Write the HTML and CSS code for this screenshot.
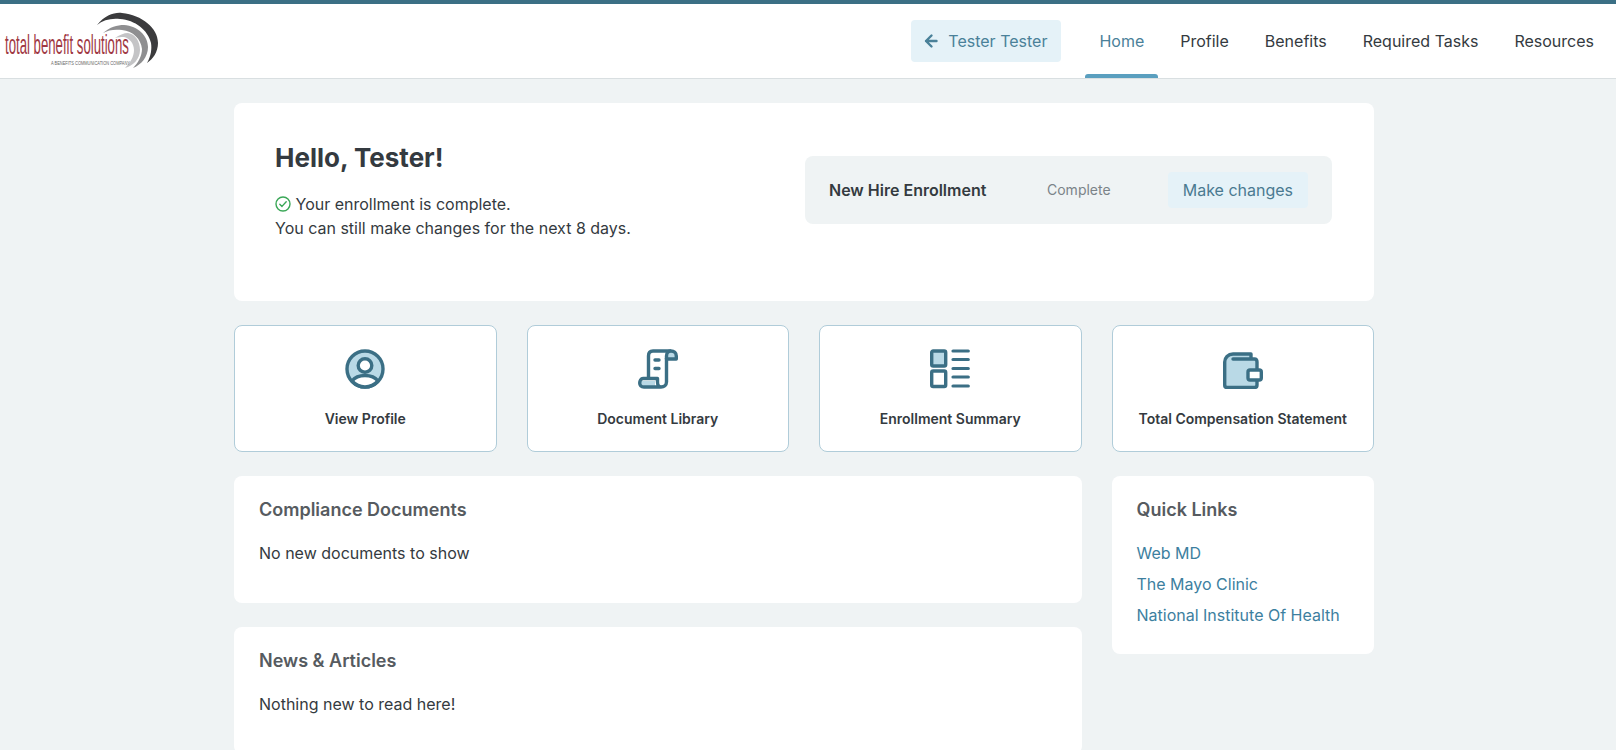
FILE: index.html
```html
<!DOCTYPE html>
<html lang="en">
<head>
<meta charset="utf-8">
<title>Total Benefit Solutions</title>
<link rel="stylesheet" href="styles.css">
</head>
<body>
<header class="header">
  <a class="logo" href="#">
    <svg width="165" height="72" viewBox="0 4 165 72">
      <path d="M97 25C105 15 115 12 122 13C142 15 158 28 158 43C158 52 153 59 147 63C151 56 152 49 151 43C148 30 135 20 120 19C111 18 103 20 97 25Z" fill="#3b3b3d"/>
      <path d="M103 33C110 27 117 25 124 25C138 26 148 36 148 47C148 57 141 65 133 68C138 63 142 56 142 49C141 39 133 31 122 30C115 29 108 30 103 33Z" fill="#8f8f91"/>
      <path d="M115 38C119 35 124 33 128 33C135 34 140 41 140 50C140 59 133 66 125 68C130 63 134 57 134 50C134 43 129 38 124 37C121 37 118 37 115 38Z" fill="#c4c4c6"/>
      <text class="logo-name" transform="translate(5 53.500) scale(.463 1)">total benefit solutions</text>
      <text class="logo-tag" x="51" y="64.500" textLength="79" lengthAdjust="spacingAndGlyphs">A BENEFITS COMMUNICATION COMPANY</text>
    </svg>
  </a>
  <nav class="nav">
    <a class="back" href="#">
      <svg width="14" height="16" viewBox="0 0 14 16"><path d="M12.500 8H2M7.500 2.500 2 8 7.500 13.500" fill="none" stroke="currentColor" stroke-width="2.400" stroke-linecap="round" stroke-linejoin="round"/></svg>
      <span>Tester Tester</span>
    </a>
    <ul class="menu">
      <li class="menu-item is-active"><a href="#">Home</a></li>
      <li class="menu-item"><a href="#">Profile</a></li>
      <li class="menu-item"><a href="#">Benefits</a></li>
      <li class="menu-item"><a href="#">Required Tasks</a></li>
      <li class="menu-item"><a href="#">Resources</a></li>
    </ul>
  </nav>
</header>
<main class="main">
  <section class="card hero">
    <div class="hero-text">
      <h1>Hello, Tester!</h1>
      <p><svg class="check" width="16" height="16" viewBox="0 0 16 16"><circle cx="8" cy="8" r="7" fill="none" stroke="#3aa757" stroke-width="1.400"/><path d="M4.800 8.200 7 10.400 11.200 5.800" fill="none" stroke="#3aa757" stroke-width="1.400" stroke-linecap="round" stroke-linejoin="round"/></svg> Your enrollment is complete.<br>You can still make changes for the next 8 days.</p>
    </div>
    <div class="status">
      <strong>New Hire Enrollment</strong>
      <span class="status-label">Complete</span>
      <a class="status-btn" href="#">Make changes</a>
    </div>
  </section>
  <section class="tiles">
    <a class="tile" href="#">
      <svg width="40" height="40" viewBox="0 0 40 40"><circle cx="20" cy="20" r="18" fill="#b9d9e6" stroke="#3b6f85" stroke-width="3.400"/><path d="M7 32C10 28 15 26.500 20 26.500C25 26.500 30 28 33 32C29 36.500 25 38 20 38C15 38 11 36.500 7 32Z" fill="#fff" stroke="#3b6f85" stroke-width="3.400"/><circle cx="20" cy="16.500" r="6.800" fill="#fff" stroke="#3b6f85" stroke-width="3.400"/></svg>
      <span>View Profile</span>
    </a>
    <a class="tile" href="#">
      <svg width="40" height="40" viewBox="0 0 40 40"><path d="M33 2H15C12 2 10.500 4 10.500 7V29.500" fill="none" stroke="#3b6f85" stroke-width="3.400"/><path d="M33 2C36 2 38.300 4 38.300 7V10H28.500V7C28.500 4 30 2 33 2Z" fill="#b9d9e6" stroke="#3b6f85" stroke-width="3.400" stroke-linejoin="round"/><path d="M3 32H17V37H6C3.500 37 2.500 34 3 32Z" fill="#b9d9e6"/><path d="M28.500 9V33C28.500 36 26 38 23 38H6C3 38 1.700 36 1.700 34C1.700 32 3 29.500 5 29.500H19.500V33C19.500 36 21 38 23 38" fill="none" stroke="#3b6f85" stroke-width="3.400" stroke-linejoin="round"/><path d="M17 11H21M17 19.500H21" stroke="#3b6f85" stroke-width="3.400" stroke-linecap="round"/></svg>
      <span>Document Library</span>
    </a>
    <a class="tile" href="#">
      <svg width="40" height="40" viewBox="0 0 40 40"><rect x="1.700" y="2" width="14" height="15" rx="1.500" fill="#b9d9e6" stroke="#3b6f85" stroke-width="3.400"/><rect x="1.700" y="22" width="14" height="15.500" rx="1.500" fill="#fff" stroke="#3b6f85" stroke-width="3.400"/><path d="M23 2H38.300M23 10.500H38.300M23 19.500H38.300M23 28H38.300M23 37H38.300" stroke="#3b6f85" stroke-width="3.200" stroke-linecap="round"/></svg>
      <span>Enrollment Summary</span>
    </a>
    <a class="tile" href="#">
      <svg width="40" height="40" viewBox="0 0 40 40"><path d="M28 10V5H10C5 5 1.700 9 1.700 13V36C1.700 38 2.500 38.500 4 38.500H31.500C33 38.500 34 38 34 36V13C34 11 33 10 31.500 10H10" fill="#b9d9e6" stroke="#3b6f85" stroke-width="3.400" stroke-linejoin="round" stroke-linecap="round"/><rect x="25" y="21" width="13.300" height="10" rx="2" fill="#fff" stroke="#3b6f85" stroke-width="3.400"/></svg>
      <span>Total Compensation Statement</span>
    </a>
  </section>
  <section class="columns">
    <div class="column-main">
      <article class="card panel panel-compliance">
        <h2>Compliance Documents</h2>
        <p>No new documents to show</p>
      </article>
      <article class="card panel panel-news">
        <h2>News &amp; Articles</h2>
        <p>Nothing new to read here!</p>
      </article>
    </div>
    <aside class="card panel panel-links">
      <h2>Quick Links</h2>
      <ul class="links">
        <li><a href="#">Web MD</a></li>
        <li><a href="#">The Mayo Clinic</a></li>
        <li><a href="#">National Institute Of Health</a></li>
      </ul>
    </aside>
  </section>
</main>
</body>
</html>
```
FILE: styles.css
```css
* { box-sizing: border-box; }
html, body { height: 100%; }
body {
  margin: 0;
  height: 750px;
  overflow: hidden;
  background: #eff3f4;
  color: #343a40;
  font-family: Inter, "Liberation Sans", sans-serif;
  font-size: 16px;
  line-height: 24px;
}
a { text-decoration: none; color: inherit; }
h1, h2, p, ul { margin: 0; padding: 0; }
ul { list-style: none; }

.header {
  display: flex;
  justify-content: space-between;
  align-items: center;
  height: 79px;
  background: #fff;
  border-top: 4px solid #3b6f85;
  border-bottom: 1px solid #d9dfe1;
  padding: 0 4px 0 0;
}
.logo { display: block; height: 72px; align-self: flex-start; }
.logo svg { display: block; }
.logo-name { font-family: "Liberation Sans", sans-serif; font-size: 28.500px; fill: #a03843; }
.logo-tag { font-family: "Liberation Sans", sans-serif; font-size: 5.500px; fill: #666; }

.nav { display: flex; align-items: center; height: 100%; }
.back {
  display: flex;
  align-items: center;
  gap: 10px;
  height: 42px;
  padding: 0 14px 0 13px;
  margin-right: 24px;
  border-radius: 4px;
  background: #e5f2f8;
  color: #4a8199;
}
.menu { display: flex; height: 100%; }
.menu-item { display: flex; align-items: center; position: relative; padding: 0 18px; height: 100%; }
.menu-item.is-active { color: #4a8199; padding: 0 14px; margin-right: 4px; }
.menu-item.is-active::after {
  content: "";
  position: absolute;
  left: 0; right: 0; bottom: 0;
  height: 4px;
  border-radius: 3px 3px 0 0;
  background: #5a9fbf;
}

.main { width: 1140px; margin: 24px 0 0 234px; }
.card { background: #fff; border-radius: 8px; }

.hero {
  display: flex;
  justify-content: space-between;
  align-items: flex-start;
  height: 198px;
  padding: 37px 42px 0 41px;
  margin-bottom: 24px;
}
h1 { font-size: 26px; line-height: 36px; font-weight: 700; margin-bottom: 16px; }
.check { vertical-align: -2px; }
.status {
  display: flex;
  align-items: center;
  width: 527px;
  height: 68px;
  margin-top: 16px;
  padding: 0 24px;
  border-radius: 8px;
  background: #eff3f4;
}
.status strong { font-weight: 600; width: 218px; flex: none; }
.status-label { font-size: 14px; color: #7b8388; white-space: nowrap; }
.status-btn {
  margin-left: auto;
  padding: 6px 15px;
  border-radius: 4px;
  background: #e5f2f8;
  color: #4a7a91;
  white-space: nowrap;
}

.tiles {
  display: grid;
  grid-template-columns: repeat(4, 1fr);
  gap: 30px;
  margin-bottom: 24px;
}
.tile {
  display: flex;
  flex-direction: column;
  align-items: center;
  height: 127px;
  padding-top: 23px;
  background: #fff;
  border: 1px solid #b0ccd9;
  border-radius: 8px;
  font-size: 14px;
  font-weight: 600;
}
.tile svg { margin-bottom: 18px; }

.columns { display: grid; grid-template-columns: 848px 262px; gap: 30px; align-items: start; }
.column-main { display: flex; flex-direction: column; gap: 24px; }
.panel { padding: 22px 25px; }
.panel h2 { font-size: 18px; line-height: 24px; font-weight: 600; color: #565b60; margin-bottom: 19px; }
.panel-compliance { height: 127px; }
.panel-news { height: 127px; }
.panel-links { height: 178px; padding-left: 24.500px; }
.links li { margin-bottom: 7px; color: #3d7f9f; }
```
